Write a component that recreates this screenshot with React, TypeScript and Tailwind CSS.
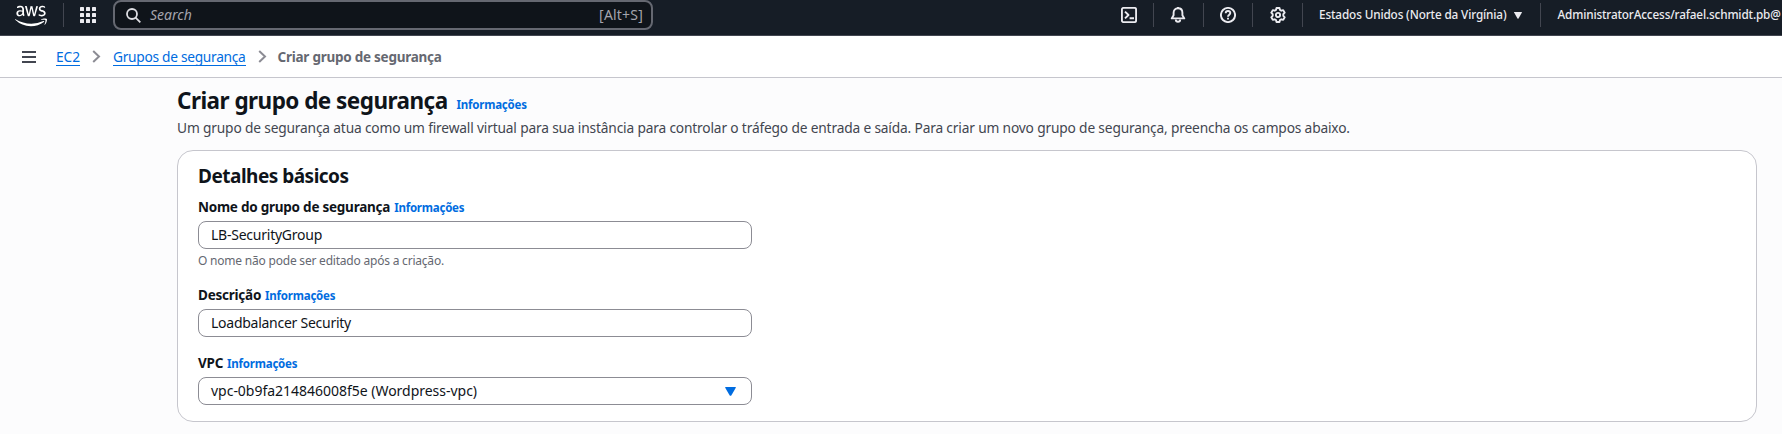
import type { ReactNode } from "react";
import { FaAws } from "react-icons/fa";

function Info({ className = "" }: { className?: string }) {
  return (
    <a className={`text-[11.5px] font-bold tracking-[-0.22px] text-[#006ce0] ${className}`}>
      Informações
    </a>
  );
}

function Field({ label, help, className = "", children }: { label: string; help?: string; className?: string; children: ReactNode }) {
  return (
    <div className={className}>
      <div className="flex h-5 items-baseline gap-1 leading-5">
        <label className="text-[13.5px] font-bold tracking-[-0.24px] text-[#0f141a]">{label}</label>
        <Info />
      </div>
      <div className="mt-1 flex h-7 w-[554px] items-center justify-between rounded-lg border border-[#8c8c94] bg-white px-3 text-sm leading-5 text-[#0f141a]">
        {children}
      </div>
      {help && <p className="mt-1 text-xs leading-4 tracking-[-0.21px] text-[#656871]">{help}</p>}
    </div>
  );
}

function Divider() {
  return <div className="h-6 w-px shrink-0 bg-[#424650]" />;
}

const stroke = {
  width: 16,
  height: 16,
  viewBox: "0 0 16 16",
  fill: "none",
  stroke: "#ebebf0",
  strokeWidth: 1.9,
  strokeLinejoin: "round" as const,
};

function TopBar() {
  return (
    <header className="flex h-9 items-start border-b border-[#424650] bg-[#161d26]">
      <div className="flex h-[30px] w-full items-center">
        <FaAws className="mt-0.5 ml-[15px] h-[26px] w-[32px] shrink-0 scale-y-[1.06] text-white" />
        <div className="ml-4">
          <Divider />
        </div>
        <svg className="ml-4 shrink-0" width="16" height="16" viewBox="0 0 16 16" fill="#ebebf0">
          {[0, 6, 12].map((y) => [0, 6, 12].map((x) => <rect key={`${x}-${y}`} x={x} y={y} width="4" height="4" rx="0.6" />))}
        </svg>
        <div className="ml-[17px] flex h-[30px] w-[540px] shrink-0 items-center rounded-lg border-2 border-[#656871] bg-[#0f141a] pr-2 pl-[11px]">
          <svg width="15" height="15" viewBox="0 0 15 15" fill="none" stroke="#dedee3" strokeWidth="1.8">
            <circle cx="6" cy="6" r="5" />
            <path d="M9.6 9.6 14.3 14.3" />
          </svg>
          <span className="ml-[9px] text-sm text-[#a4a4ad] italic">Search</span>
          <span className="ml-auto text-sm tracking-[0.2px] text-[#a4a4ad]">[Alt+S]</span>
        </div>
        <div className="ml-[468px] flex shrink-0 items-center">
          <svg {...stroke}>
            <rect x="0.9" y="0.9" width="14.2" height="14.2" rx="1.6" />
            <path d="M4 4.6 7.5 8 4 11.4M8.6 11.2H13" />
          </svg>
          <div className="ml-4">
            <Divider />
          </div>
          <svg {...stroke} className="ml-4">
            <path d="M8 1.3C5.1 1.3 3.6 3.3 3.6 5.8v2.4L1.7 11.4h12.6L12.4 8.2V5.8C12.4 3.3 10.9 1.3 8 1.3Z" />
            <path d="M5.8 12.4a2.2 2.3 0 0 0 4.4 0" />
            <path d="M8 0v2" />
          </svg>
          <div className="ml-[17px]">
            <Divider />
          </div>
          <svg {...stroke} className="ml-4">
            <circle cx="8" cy="8" r="7.1" />
            <path d="M5.7 6.3C5.7 4.8 6.7 4 8 4s2.3.8 2.3 2.1C10.3 7.6 8 7.8 8 9.7" />
            <path d="M8 10.8v1.6" />
          </svg>
          <div className="ml-4">
            <Divider />
          </div>
          <svg {...stroke} className="ml-[17px]">
            <path d="M6.5 1h3l.5 1.9 1.3.8 1.9-.6 1.5 2.6L13.3 7.2v1.6l1.4 1.5-1.5 2.6-1.9-.6-1.3.8L9.5 15h-3L6 13.1l-1.3-.8-1.9.6-1.5-2.6L2.7 8.8V7.2L1.3 5.7l1.5-2.6 1.9.6L6 2.9Z" />
            <circle cx="8" cy="8" r="2.1" />
          </svg>
          <div className="ml-4">
            <Divider />
          </div>
          <span className="ml-4 text-[11.75px] font-medium tracking-[-0.135px] whitespace-nowrap text-[#ebebf0]">
            Estados Unidos (Norte da Virgínia)
          </span>
          <svg className="ml-[7px]" width="8" height="7" viewBox="0 0 8 7" fill="#ebebf0">
            <path d="M.3 0h7.4q.4.2.2.6L4.5 6.5q-.5.5-1 0L.1.6Q0 .2.3 0Z" />
          </svg>
          <div className="ml-[18px]">
            <Divider />
          </div>
          <span className="ml-[17px] text-[11.75px] font-medium tracking-[-0.15px] whitespace-nowrap text-[#ebebf0]">
            AdministratorAccess/rafael.schmidt.pb@
          </span>
        </div>
      </div>
    </header>
  );
}

function Chevron({ className }: { className: string }) {
  return (
    <svg className={className} width="9" height="13" viewBox="0 0 9 13" fill="none" stroke="#8c8c94" strokeWidth="2">
      <path d="M1.2 1 7 6.5 1.2 12" />
    </svg>
  );
}

function Breadcrumbs() {
  return (
    <nav className="flex h-[42px] items-center border-b border-[#c6c6cd] bg-white pl-[22px] text-[13.75px]">
      <svg width="14" height="12" viewBox="0 0 14 12" fill="#424650">
        <path d="M0 0h14v2H0zM0 5h14v2H0zM0 10h14v2H0z" />
      </svg>
      <a className="ml-5 h-[19px] border-b border-[#006ce0] leading-5 tracking-[-0.1px] text-[#006ce0]">EC2</a>
      <Chevron className="ml-3" />
      <a className="ml-3 h-[19px] border-b border-[#006ce0] leading-5 tracking-[-0.29px] text-[#006ce0]">
        Grupos de segurança
      </a>
      <Chevron className="ml-3" />
      <span className="ml-[11px] text-[13.5px] leading-5 font-bold tracking-[-0.25px] text-[#656871]">
        Criar grupo de segurança
      </span>
    </nav>
  );
}

export default function App() {
  return (
    <div className="h-[434px] w-[1782px] overflow-hidden bg-[#fcfcfd] font-['Noto_Sans','Open_Sans',sans-serif]">
      <TopBar />
      <Breadcrumbs />
      <main className="pt-2 pr-[25px] pl-[177px]">
        <div className="flex h-[30px] items-baseline leading-[30px]">
          <h1 className="text-[22.5px] font-bold tracking-[-0.54px] text-[#0f141a]">Criar grupo de segurança</h1>
          <Info className="ml-[9px]" />
        </div>
        <p className="mt-0.5 text-[13.75px] leading-5 tracking-[-0.17px] text-[#424650]">
          Um grupo de segurança atua como um firewall virtual para sua instância para controlar o tráfego de entrada e
          saída. Para criar um novo grupo de segurança, preencha os campos abaixo.
        </p>
        <section className="mt-3 h-[272px] rounded-2xl border border-[#c6c6cd] bg-white px-5 pt-[13px]">
          <h2 className="text-[19px] leading-6 font-bold tracking-[-0.5px] text-[#0f141a]">Detalhes básicos</h2>
          <Field className="mt-[9px]" label="Nome do grupo de segurança" help="O nome não pode ser editado após a criação.">
            <span className="tracking-[-0.24px]">LB-SecurityGroup</span>
          </Field>
          <Field className="mt-4" label="Descrição">
            <span className="tracking-[-0.26px]">Loadbalancer Security</span>
          </Field>
          <Field className="mt-4" label="VPC">
            <span className="tracking-[-0.02px]">vpc-0b9fa214846008f5e (Wordpress-vpc)</span>
            <svg className="mr-[3px]" width="11" height="9" viewBox="0 0 11 9" fill="#006ce0">
              <path d="M.6 0h9.8q.6.2.4.8L6.3 8.4q-.8.8-1.6 0L.2.8Q0 .2.6 0Z" />
            </svg>
          </Field>
        </section>
      </main>
    </div>
  );
}
